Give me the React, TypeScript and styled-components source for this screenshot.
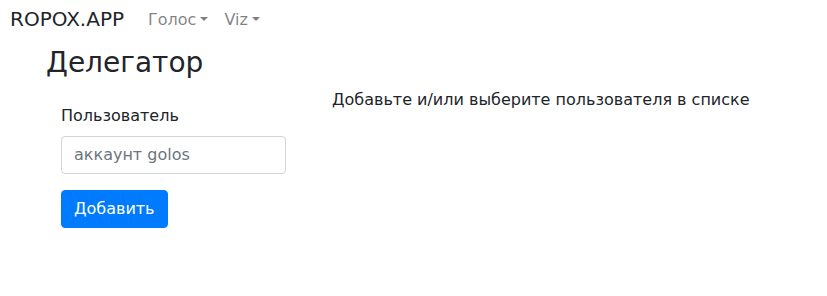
import React from "react";
import styled, { createGlobalStyle } from "styled-components";

const GlobalStyle = createGlobalStyle`
  *, *::before, *::after {
    box-sizing: border-box;
  }
  body {
    margin: 0;
    background: #ffffff;
    color: #212529;
    font-family: "DejaVu Sans", "Liberation Sans", sans-serif;
    font-size: 16px;
    line-height: 1.5;
  }
`;

const Navbar = styled.nav`
  height: 40px;
  padding: 0 10px;
  display: flex;
  align-items: center;
`;

const Brand = styled.a`
  margin-right: 16px;
  font-size: 20px;
  line-height: 30px;
  color: #212529;
  text-decoration: none;
  margin-top: -2px;
`;

const NavList = styled.ul`
  display: flex;
  margin: 0;
  padding: 0;
  list-style: none;
`;

const NavLink = styled.a`
  display: block;
  padding: 8px;
  color: rgba(0, 0, 0, 0.5);
  text-decoration: none;
  cursor: pointer;

  &::after {
    content: "";
    display: inline-block;
    margin-left: 0.255em;
    vertical-align: 0.255em;
    border-top: 0.3em solid;
    border-right: 0.3em solid transparent;
    border-left: 0.3em solid transparent;
    border-bottom: 0;
  }
`;

const Main = styled.main`
  padding-left: 46px;
`;

const Title = styled.h3`
  margin: 6px 0 8px;
  font-size: 28px;
  font-weight: 400;
  line-height: 1.2;
`;

const Row = styled.div`
  display: grid;
  grid-template-columns: 286px 1fr;
`;

const Side = styled.div`
  padding: 16px 0 0 15px;
`;

const Group = styled.div`
  margin-bottom: 16px;
`;

const Label = styled.label`
  display: inline-block;
  margin-bottom: 8px;
`;

const Input = styled.input`
  display: block;
  width: 225px;
  height: 38px;
  padding: 6px 12px;
  font: inherit;
  color: #495057;
  border: 1px solid #ced4da;
  border-radius: 4px;
  background: #ffffff;

  &::placeholder {
    color: #6c757d;
    opacity: 1;
  }
`;

const Button = styled.button`
  height: 38px;
  padding: 6px 12px;
  font: inherit;
  color: #ffffff;
  background: #007bff;
  border: 1px solid #007bff;
  border-radius: 4px;
  cursor: pointer;
`;

const Hint = styled.p`
  margin: 0;
`;

export default function App() {
  return (
    <>
      <GlobalStyle />
      <Navbar>
        <Brand href="#">ROPOX.APP</Brand>
        <NavList>
          <li>
            <NavLink>Голос</NavLink>
          </li>
          <li>
            <NavLink>Viz</NavLink>
          </li>
        </NavList>
      </Navbar>
      <Main>
        <Title>Делегатор</Title>
        <Row>
          <Side>
            <Group>
              <Label htmlFor="account">Пользователь</Label>
              <Input id="account" placeholder="аккаунт golos" />
            </Group>
            <Button>Добавить</Button>
          </Side>
          <Hint>Добавьте и/или выберите пользователя в списке</Hint>
        </Row>
      </Main>
    </>
  );
}
